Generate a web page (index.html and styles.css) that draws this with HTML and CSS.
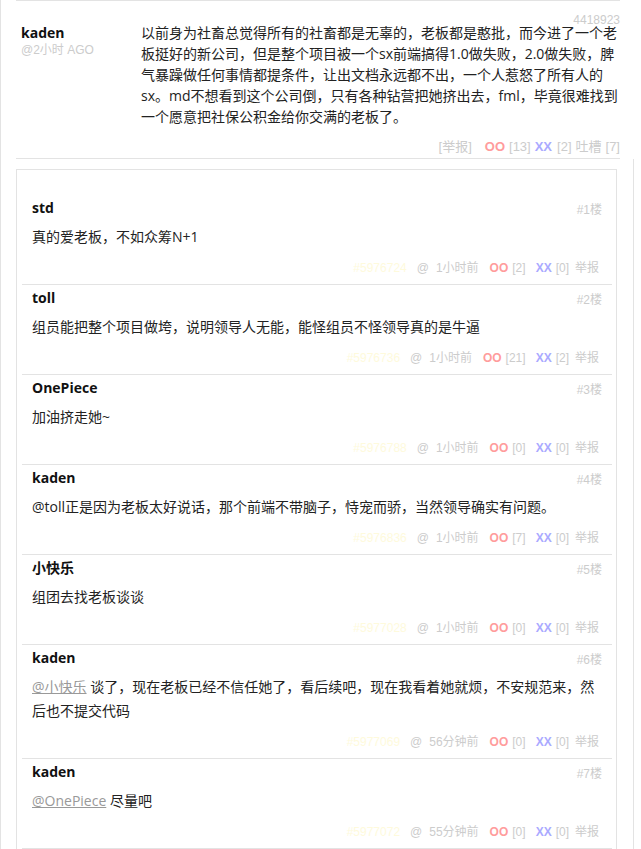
FILE: index.html
```html
<!DOCTYPE html>
<html lang="zh-CN">
<head>
<meta charset="utf-8">
<title>吐槽</title>
<link rel="stylesheet" href="styles.css">
</head>
<body>
<div class="page">
  <div class="post">
    <div class="post-id">4418923</div>
    <div class="post-main">
      <div class="author">
        <div class="author-name">kaden</div>
        <div class="author-time">@2小时 AGO</div>
      </div>
      <div class="post-text">以前身为社畜总觉得所有的社畜都是无辜的，老板都是憨批，而今进了一个老板挺好的新公司，但是整个项目被一个sx前端搞得1.0做失败，2.0做失败，脾气暴躁做任何事情都提条件，让出文档永远都不出，一个人惹怒了所有人的sx。md不想看到这个公司倒，只有各种钻营把她挤出去，fml，毕竟很难找到一个愿意把社保公积金给你交满的老板了。</div>
    </div>
    <div class="post-foot"><span class="gray">[举报]</span><span class="oo pf-oo">OO</span><span class="gray pf-n">[13]</span><span class="xx pf-xx">XX</span><span class="gray pf-n2">[2]</span><span class="gray pf-t">吐槽</span><span class="gray pf-n">[7]</span></div>
  </div>

  <div class="comments-wrap">
    <div class="comments">
      <div class="comment">
        <div class="c-head"><span class="c-name">std</span><span class="c-floor">#1楼</span></div>
        <div class="c-text">真的爱老板，不如众筹N+1</div>
        <div class="c-foot"><span class="c-id">#5976724</span><span class="gray at">@</span><span class="gray t">1小时前</span><span class="oo o">OO</span><span class="gray n">[2]</span><span class="xx x">XX</span><span class="gray n">[0]</span><span class="gray r">举报</span></div>
      </div>
      <div class="comment">
        <div class="c-head"><span class="c-name">toll</span><span class="c-floor">#2楼</span></div>
        <div class="c-text">组员能把整个项目做垮，说明领导人无能，能怪组员不怪领导真的是牛逼</div>
        <div class="c-foot"><span class="c-id">#5976736</span><span class="gray at">@</span><span class="gray t">1小时前</span><span class="oo o">OO</span><span class="gray n">[21]</span><span class="xx x">XX</span><span class="gray n">[2]</span><span class="gray r">举报</span></div>
      </div>
      <div class="comment">
        <div class="c-head"><span class="c-name">OnePiece</span><span class="c-floor">#3楼</span></div>
        <div class="c-text">加油挤走她~</div>
        <div class="c-foot"><span class="c-id">#5976788</span><span class="gray at">@</span><span class="gray t">1小时前</span><span class="oo o">OO</span><span class="gray n">[0]</span><span class="xx x">XX</span><span class="gray n">[0]</span><span class="gray r">举报</span></div>
      </div>
      <div class="comment">
        <div class="c-head"><span class="c-name">kaden</span><span class="c-floor">#4楼</span></div>
        <div class="c-text">@toll正是因为老板太好说话，那个前端不带脑子，恃宠而骄，当然领导确实有问题。</div>
        <div class="c-foot"><span class="c-id">#5976836</span><span class="gray at">@</span><span class="gray t">1小时前</span><span class="oo o">OO</span><span class="gray n">[7]</span><span class="xx x">XX</span><span class="gray n">[0]</span><span class="gray r">举报</span></div>
      </div>
      <div class="comment">
        <div class="c-head"><span class="c-name">小快乐</span><span class="c-floor">#5楼</span></div>
        <div class="c-text">组团去找老板谈谈</div>
        <div class="c-foot"><span class="c-id">#5977028</span><span class="gray at">@</span><span class="gray t">1小时前</span><span class="oo o">OO</span><span class="gray n">[0]</span><span class="xx x">XX</span><span class="gray n">[0]</span><span class="gray r">举报</span></div>
      </div>
      <div class="comment">
        <div class="c-head"><span class="c-name">kaden</span><span class="c-floor">#6楼</span></div>
        <div class="c-text"><a class="mention" href="#">@小快乐</a> 谈了，现在老板已经不信任她了，看后续吧，现在我看着她就烦，不安规范来，然后也不提交代码</div>
        <div class="c-foot"><span class="c-id">#5977069</span><span class="gray at">@</span><span class="gray t">56分钟前</span><span class="oo o">OO</span><span class="gray n">[0]</span><span class="xx x">XX</span><span class="gray n">[0]</span><span class="gray r">举报</span></div>
      </div>
      <div class="comment">
        <div class="c-head"><span class="c-name">kaden</span><span class="c-floor">#7楼</span></div>
        <div class="c-text"><a class="mention" href="#">@OnePiece</a> 尽量吧</div>
        <div class="c-foot"><span class="c-id">#5977072</span><span class="gray at">@</span><span class="gray t">55分钟前</span><span class="oo o">OO</span><span class="gray n">[0]</span><span class="xx x">XX</span><span class="gray n">[0]</span><span class="gray r">举报</span></div>
      </div>
    </div>
  </div>
</div>
</body>
</html>
```

FILE: styles.css
```css
html, body {
  margin: 0;
  padding: 0;
  background: #fff;
}

body {
  font-family: "Open Sans", "Noto Sans CJK SC", sans-serif;
  font-size: 14px;
  color: #333;
}

.page {
  border-left: 1px solid #e3e3e3;
  padding-left: 15px;
  min-height: 849px;
  box-sizing: border-box;
}

/* main post */
.post {
  width: 604px;
  border-top: 1px solid #e3e3e3;
  border-bottom: 1px solid #e3e3e3;
  padding-top: 11px;
  padding-bottom: 1px;
}

.post-id {
  height: 10px;
  line-height: 16px;
  text-align: right;
  font-family: "Liberation Sans", Arial, sans-serif;
  font-size: 12px;
  color: #ccc;
}

.post-main {
  display: flex;
}

.author {
  width: 125px;
  flex: none;
  padding-left: 5px;
  box-sizing: border-box;
}

.author-name {
  font-weight: bold;
  font-size: 14px;
  line-height: 21px;
  color: #111;
}

.author-time {
  font-family: "Liberation Sans", Arial, "Noto Sans CJK SC", sans-serif;
  font-size: 12px;
  line-height: 14px;
  color: #ccc;
}

.post-text {
  flex: 1;
  line-height: 21px;
  color: #222;
}

.post-foot {
  margin-top: 10px;
  height: 20px;
  line-height: 20px;
  display: flex;
  justify-content: flex-end;
  font-family: "Liberation Sans", Arial, "Noto Sans CJK SC", sans-serif;
  font-size: 13px;
  white-space: nowrap;
}

.post-foot .pf-oo { margin-left: 13px; }
.post-foot .pf-n { margin-left: 4px; }
.post-foot .pf-xx { margin-left: 4px; }
.post-foot .pf-n2 { margin-left: 5px; }
.post-foot .pf-t { margin-left: 4px; }

.gray { color: #ccc; }
.oo { color: #ff9c9c; font-weight: bold; }
.xx { color: #aaaaff; font-weight: bold; }

/* comments */
.comments-wrap {
  padding-top: 10px;
  padding-right: 15px;
  width: 602px;
  border-right: 1px solid #e3e3e3;
}

.comments {
  width: 599px;
  border: 1px solid #e3e3e3;
  border-bottom: none;
  padding-top: 25px;
}

.comment {
  margin: 0 4px 0 5px;
  padding: 3px 10px 6px 10px;
  border-bottom: 1px solid #e3e3e3;
}

.c-head {
  display: flex;
  justify-content: space-between;
  align-items: center;
  height: 20px;
}

.c-name {
  font-weight: bold;
  font-size: 14px;
  line-height: 20px;
  color: #111;
}

.c-floor {
  font-family: "Liberation Sans", Arial, "Noto Sans CJK SC", sans-serif;
  font-size: 12px;
  color: #ccc;
}

.c-text {
  margin-top: 7px;
  line-height: 24px;
  color: #222;
}

.mention {
  color: #999;
  text-decoration: underline;
}

.c-foot {
  margin-top: 9px;
  height: 20px;
  line-height: 20px;
  display: flex;
  justify-content: flex-end;
  padding-right: 3px;
  font-family: "Liberation Sans", Arial, "Noto Sans CJK SC", sans-serif;
  font-size: 12px;
  white-space: nowrap;
}

.c-id { color: #fefadc; }
.c-foot .at { margin-left: 10px; }
.c-foot .t { margin-left: 7px; }
.c-foot .o { margin-left: 11px; }
.c-foot .n { margin-left: 4px; }
.c-foot .x { margin-left: 10px; }
.c-foot .r { margin-left: 6px; }
```
